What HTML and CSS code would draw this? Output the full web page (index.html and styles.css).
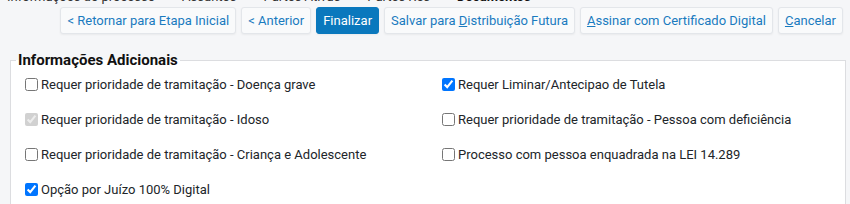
FILE: index.html
```html
<!DOCTYPE html>
<html lang="pt">
<head>
<meta charset="utf-8">
<link rel="stylesheet" href="styles.css">
</head>
<body>
<div class="page">
  <nav class="tabs">
    <span class="tab">Informações do processo</span>
    <span class="tab">Assuntos</span>
    <span class="tab">Partes Ativas</span>
    <span class="tab">Partes Rés</span>
    <span class="tab active">Documentos</span>
  </nav>
  <div class="toolbar">
    <button class="btn">&lt; Retornar para Etapa Inicial</button>
    <button class="btn">&lt; Anterior</button>
    <button class="btn primary">Finalizar</button>
    <button class="btn">Salvar para <u>D</u>istribuição Futura</button>
    <button class="btn"><u>A</u>ssinar com Certificado Digital</button>
    <button class="btn"><u>C</u>ancelar</button>
  </div>
  <fieldset class="info">
    <legend>Informações Adicionais</legend>
    <div class="grid">
      <label class="opt"><input type="checkbox">Requer prioridade de tramitação - Doença grave</label>
      <label class="opt"><input type="checkbox" checked>Requer Liminar/Antecipao de Tutela</label>
      <label class="opt"><input type="checkbox" checked disabled>Requer prioridade de tramitação - Idoso</label>
      <label class="opt"><input type="checkbox">Requer prioridade de tramitação - Pessoa com deficiência</label>
      <label class="opt"><input type="checkbox">Requer prioridade de tramitação - Criança e Adolescente</label>
      <label class="opt"><input type="checkbox">Processo com pessoa enquadrada na LEI 14.289</label>
      <label class="opt"><input type="checkbox" checked>Opção por Juízo 100% Digital</label>
    </div>
  </fieldset>
</div>
</body>
</html>
```
FILE: styles.css
```css
html, body {
  margin: 0;
  padding: 0;
  background: #f5f6f8;
  font-family: Roboto, "Liberation Sans", sans-serif;
  color: #212529;
  overflow: hidden;
}
.page {
  display: flex;
  flex-direction: column;
}
.tabs {
  display: flex;
  gap: 27px;
  padding-left: 7px;
  margin-top: -11px;
  height: 16px;
  line-height: 16px;
  font-size: 13px;
  color: #333;
  white-space: nowrap;
}
.tab.active {
  font-weight: 700;
  color: #111;
}
.toolbar {
  display: flex;
  justify-content: flex-end;
  gap: 5px;
  margin-top: 2px;
  padding-right: 7px;
}
.btn {
  height: 27px;
  padding: 0 6px;
  font-family: Roboto, "Liberation Sans", sans-serif;
  font-size: 13px;
  color: #1a7bbf;
  background: #f9fafb;
  border: 1px solid #e3e6ea;
  border-radius: 3px;
  box-shadow: 0 1px 2px rgba(0, 0, 0, 0.05);
  white-space: nowrap;
  cursor: pointer;
}
.btn.primary {
  background: #0a78bd;
  border-color: #0a78bd;
  color: #fff;
}
.info {
  margin: 17px 4px 0 10px;
  padding: 0 10px 20px 10px;
  background: #fff;
  border: 1px solid #dcdde0;
  min-height: 200px;
}
.info legend {
  margin-left: -5px;
  padding: 0 2px;
  font-size: 15px;
  line-height: 18px;
  font-weight: 700;
  color: #111;
}
.grid {
  display: grid;
  grid-template-columns: 417px 1fr;
  grid-auto-rows: 35px;
  margin-top: -2px;
}
.opt {
  display: flex;
  align-items: center;
  font-size: 13px;
  white-space: nowrap;
}
.opt input {
  width: 13px;
  height: 13px;
  margin: 0 3px 0 4px;
}
```
